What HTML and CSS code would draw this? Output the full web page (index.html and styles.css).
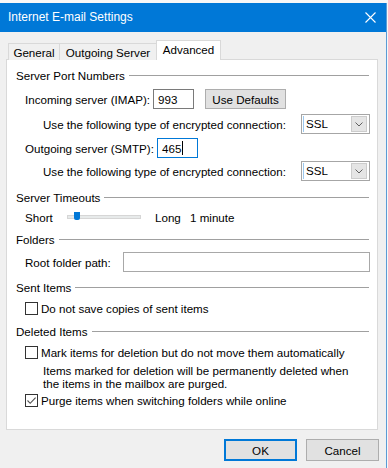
FILE: index.html
```html
<!DOCTYPE html>
<html lang="en">
<head>
  <meta charset="UTF-8">
  <meta name="viewport" content="width=device-width, initial-scale=1.0">
  <title>Internet E-mail Settings</title>
  <link rel="stylesheet" href="styles.css">
</head>
<body>
  <div class="window">
    <div class="titlebar">
      <span class="title">Internet E-mail Settings</span>
      <svg class="close" width="11" height="11" viewBox="0 0 11 11">
        <path d="M0.5 0.5 L10.5 10.5 M10.5 0.5 L0.5 10.5" stroke="#fff" stroke-width="1.1" fill="none"/>
      </svg>
    </div>

    <div class="dialog">
      <div class="tabs">
        <div class="tab tab-general">General</div>
        <div class="tab tab-outgoing">Outgoing Server</div>
        <div class="tab tab-advanced active">Advanced</div>
      </div>

      <div class="panel">
        <!-- Server Port Numbers -->
        <div class="group-title gap-6"><span>Server Port Numbers</span></div>
        <div class="field-row gap-4">
          <span class="label label-imap">Incoming server (IMAP):</span>
          <div class="textbox port">993</div>
          <button class="button defaults">Use Defaults</button>
        </div>
        <div class="field-row sub gap-3">
          <span class="label label-enc">Use the following type of encrypted connection:</span>
          <div class="select">
            <span class="select-value">SSL</span>
            <span class="select-arrow">
              <svg width="8" height="5" viewBox="0 0 8 5"><path d="M0.5 0.5 L4 4 L7.5 0.5" stroke="#606060" fill="none"/></svg>
            </span>
          </div>
        </div>
        <div class="field-row gap-2">
          <span class="label label-smtp">Outgoing server (SMTP):</span>
          <div class="textbox port focused">465<span class="caret"></span></div>
        </div>
        <div class="field-row sub gap-1">
          <span class="label label-enc">Use the following type of encrypted connection:</span>
          <div class="select">
            <span class="select-value">SSL</span>
            <span class="select-arrow">
              <svg width="8" height="5" viewBox="0 0 8 5"><path d="M0.5 0.5 L4 4 L7.5 0.5" stroke="#606060" fill="none"/></svg>
            </span>
          </div>
        </div>

        <!-- Server Timeouts -->
        <div class="group-title gap-6"><span>Server Timeouts</span></div>
        <div class="field-row short-row gap-2">
          <span class="label label-short">Short</span>
          <div class="slider">
            <span class="thumb"></span>
          </div>
          <span class="label label-long">Long</span>
          <span>1 minute</span>
        </div>

        <!-- Folders -->
        <div class="group-title gap-4"><span>Folders</span></div>
        <div class="field-row gap-3">
          <span class="label label-root">Root folder path:</span>
          <div class="textbox wide"></div>
        </div>

        <!-- Sent Items -->
        <div class="group-title gap-5"><span>Sent Items</span></div>
        <div class="check-row gap-3">
          <span class="checkbox"></span>
          <span>Do not save copies of sent items</span>
        </div>

        <!-- Deleted Items -->
        <div class="group-title gap-5"><span>Deleted Items</span></div>
        <div class="check-row gap-3">
          <span class="checkbox"></span>
          <span>Mark items for deletion but do not move them automatically</span>
        </div>
        <div class="note gap-3">Items marked for deletion will be permanently deleted when<br>the items in the mailbox are purged.</div>
        <div class="check-row gap-1">
          <span class="checkbox">
            <svg width="11" height="11" viewBox="0 0 11 11"><path d="M1.5 5.5 L4.2 8.3 L9.6 2.6" stroke="#505050" stroke-width="1.1" fill="none"/></svg>
          </span>
          <span>Purge items when switching folders while online</span>
        </div>
      </div>

      <div class="footer">
        <button class="button footer-button default">OK</button>
        <button class="button footer-button">Cancel</button>
      </div>
    </div>
  </div>
</body>
</html>
```

FILE: styles.css
```css
:root {
  --window-bg: #f0f0f0;
  --title-bg: #0078d7;
  --accent: #0078d7;
  --tab-border: #d9d9d9;
  --group-line: #a0a0a0;
  --button-bg: #e1e1e1;
  --button-border: #adadad;
  --text-color: #000;
}

* {
  box-sizing: border-box;
}

body {
  margin: 0;
  padding-top: 3px;
  background-color: #f7f7f7;
  font-family: 'Liberation Sans', Arial, sans-serif;
  font-size: 11.6px;
  color: var(--text-color);
}

.window {
  width: 387px;
  height: 465px;
  background-color: var(--window-bg);
  border-right: 1px solid #5b9bd5;
  display: flex;
  flex-direction: column;
}

.titlebar {
  height: 29px;
  background-color: var(--title-bg);
  color: #fff;
  font-size: 12px;
  display: flex;
  align-items: center;
  justify-content: space-between;
  padding: 0 10px 2px 8px;
}

.close {
  margin-top: 2px;
}

.dialog {
  padding: 8px 8px 0 6px;
}

/* Tabs */

.tabs {
  display: flex;
  height: 20px;
  padding-left: 2px;
  margin-bottom: -1px;
  position: relative;
  z-index: 1;
}

.tab {
  height: 17px;
  margin-top: 3px;
  border: 1px solid var(--tab-border);
  border-bottom: none;
  display: flex;
  align-items: center;
  justify-content: center;
  background-color: var(--window-bg);
}

.tab + .tab {
  margin-left: -1px;
}

.tab-general {
  width: 52px;
}

.tab-outgoing {
  width: 98px;
}

.tab-advanced {
  width: 65px;
}

.tab.active {
  height: 20px;
  margin-top: 0;
  background-color: #fff;
  padding-bottom: 2px;
}

/* Panel */

.panel {
  height: 371px;
  background-color: #fff;
  border: 1px solid var(--tab-border);
  padding: 0 7px 0 9px;
}

.group-title {
  height: 18px;
  display: flex;
  align-items: center;
}

.group-title::after {
  content: "";
  flex: 1;
  height: 1px;
  background-color: var(--group-line);
  margin: 1px 1px 0 4px;
}

.gap-1 { margin-top: 1px; }
.gap-2 { margin-top: 2px; }
.gap-3 { margin-top: 3px; }
.gap-4 { margin-top: 4px; }
.gap-5 { margin-top: 5px; }
.gap-6 { margin-top: 6px; }

.field-row {
  height: 22px;
  display: flex;
  align-items: center;
  padding-left: 9px;
}

.field-row.sub {
  padding-left: 27px;
}

.short-row {
  height: 18px;
}

.label {
  flex-shrink: 0;
  white-space: nowrap;
}

.label-imap { width: 128px; }
.label-smtp { width: 132px; }
.label-enc { width: 258px; }
.label-short { width: 42px; }
.label-long { width: 35px; }
.label-root { width: 98px; }

.textbox {
  height: 20px;
  border: 1px solid #7a7a7a;
  background-color: #fff;
  padding-left: 4px;
  display: flex;
  align-items: center;
}

.textbox.port {
  width: 41px;
}

.textbox.focused {
  border-color: var(--accent);
}

.textbox.wide {
  flex: 1;
  border-color: #a8a8a8;
}

.caret {
  width: 1px;
  height: 14px;
  background-color: #000;
  margin-left: 1px;
}

.button {
  height: 20px;
  background-color: var(--button-bg);
  border: 1px solid var(--button-border);
  font-family: inherit;
  font-size: 11.6px;
  color: var(--text-color);
  padding: 0;
}

.defaults {
  width: 81px;
  margin-left: 11px;
}

/* Combo box */

.select {
  width: 69px;
  height: 20px;
  border: 1px solid #a6a6a6;
  background-color: #fff;
  display: flex;
  align-items: center;
  justify-content: space-between;
  padding: 1px 2px 1px 1px;
}

.select-value {
  height: 16px;
  border-left: 1px solid #9cc8ee;
  padding-left: 2px;
  line-height: 16px;
}

.select-arrow {
  width: 16px;
  height: 16px;
  background-color: #e5e5e5;
  border: 1px solid #cccccc;
  display: flex;
  align-items: center;
  justify-content: center;
}

/* Slider */

.slider {
  width: 74px;
  height: 4px;
  background-color: #e7eaea;
  border: 1px solid #d6d6d6;
  margin-right: 14px;
  position: relative;
}

.thumb {
  position: absolute;
  left: 6px;
  top: -4px;
  width: 6px;
  height: 8px;
  background-color: var(--accent);
  border-radius: 0 0 2px 2px;
}

/* Check boxes */

.check-row {
  height: 18px;
  display: flex;
  align-items: center;
  padding-left: 9px;
}

.checkbox {
  width: 13px;
  height: 13px;
  border: 1px solid #333;
  background-color: #fff;
  margin-right: 3px;
  flex-shrink: 0;
  display: flex;
  align-items: center;
  justify-content: center;
}

.note {
  padding-left: 27px;
  line-height: 13px;
}

/* Footer */

.footer {
  display: flex;
  justify-content: flex-end;
  gap: 9px;
  padding: 9px 0 0 0;
  margin-right: -1px;
}

.footer-button {
  width: 73px;
  height: 22px;
}

.footer-button.default {
  border: 2px solid var(--accent);
}
```
